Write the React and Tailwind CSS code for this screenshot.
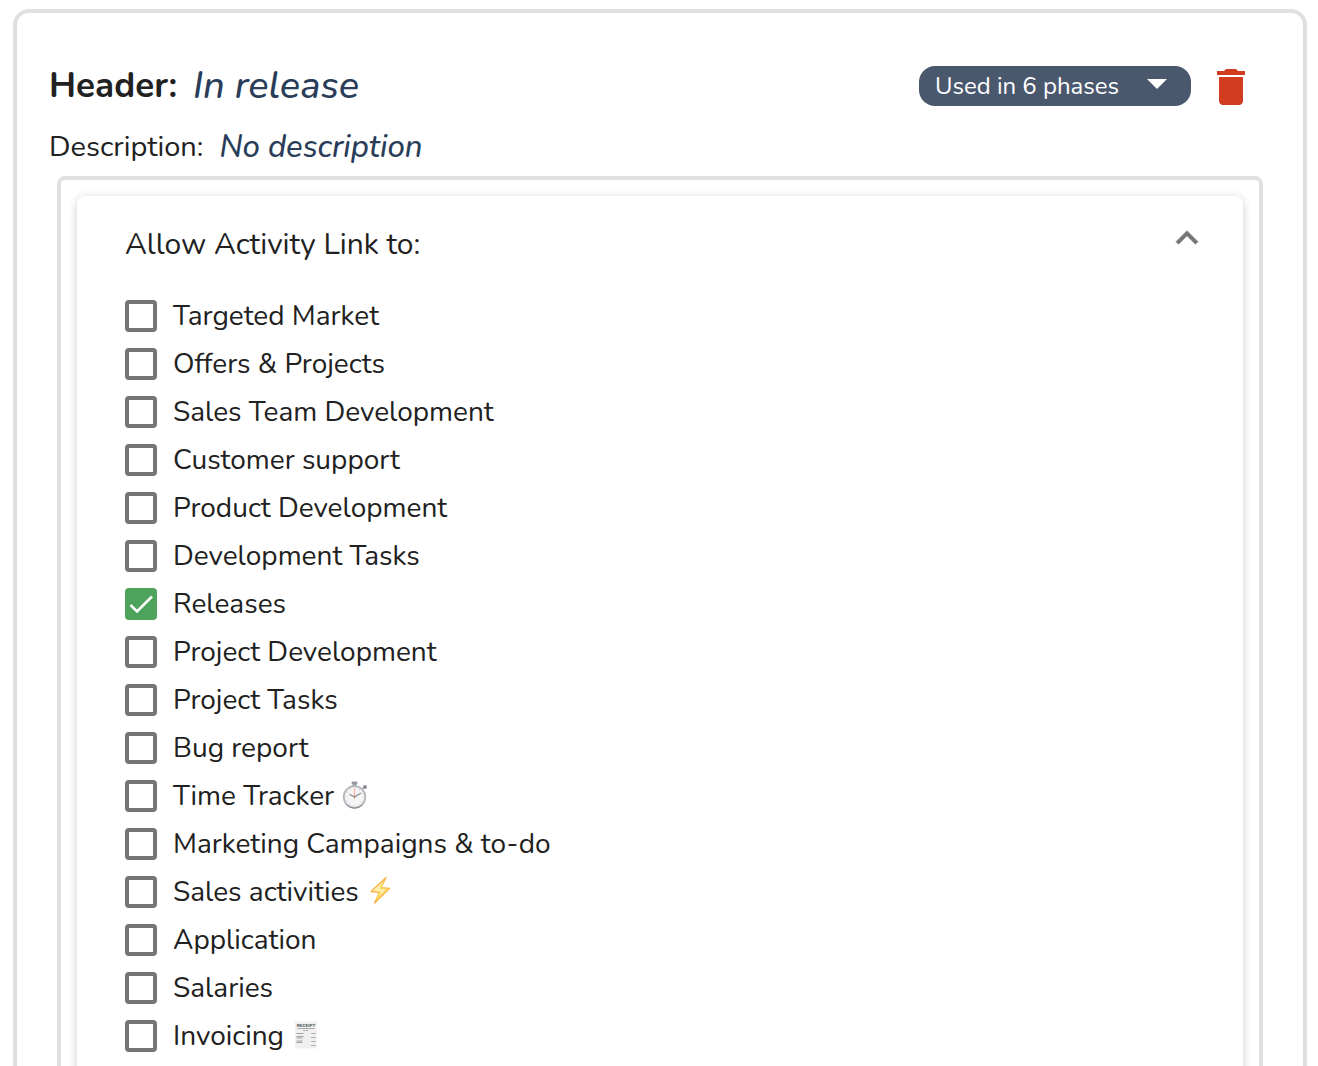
import { useState } from "react";

function Stopwatch() {
  return (
    <svg viewBox="0 0 26 28" className="mb-0.5 h-7 w-[26px]" aria-hidden="true">
      <rect x="10.500" y="1" width="4" height="5" fill="#a4a7ad" />
      <rect x="9.500" y="0.500" width="6" height="3" rx="1.400" fill="#9497a0" />
      <path d="M20.500 8l1.500-1.500" stroke="#a4a7ad" strokeWidth="1.500" />
      <circle cx="23" cy="6" r="1.900" fill="#85888e" />
      <circle cx="12.500" cy="16" r="10.800" fill="#f5f5f5" stroke="#b4b7bc" strokeWidth="1.800" />
      <circle cx="12.500" cy="16" r="8.600" fill="none" stroke="#c2c4c8" strokeWidth="1.200" strokeDasharray="0.800 3.703" />
      <path d="M12.500 18V7.500" stroke="#f5b7a2" strokeWidth="1.300" />
      <path d="M7.500 13.300l5 2.800 6.500-4" fill="none" stroke="#85888e" strokeWidth="1.200" />
      <path d="M4.500 23.800a11.300 11.300 0 0 0 16 0" fill="none" stroke="#85888e" strokeWidth="1" />
    </svg>
  );
}

function Bolt() {
  return (
    <svg viewBox="0 0 26 28" className="mb-1 h-7 w-[26px]" aria-hidden="true">
      <path d="M19 1.500L4 15.500l8.500.8L7.500 27 22.500 12.500l-8.500-.8z" fill="#fff0b0" stroke="#f9b345" strokeWidth="1.300" strokeLinejoin="round" />
      <path d="M13.500 15.300L9.500 23.500l11-10.500-7-.5 3-7" fill="none" stroke="#ffd655" strokeWidth="1.200" />
    </svg>
  );
}

function Receipt() {
  return (
    <svg viewBox="0 0 26 28" className="mb-0.5 h-7 w-[26px]" aria-hidden="true">
      <path d="M3 0.500h22v27H3z" fill="#f0f0f0" />
      <text x="14" y="6" textAnchor="middle" fontSize="4.500" fontWeight="800" fill="#55585c">RECEIPT</text>
      <path d="M5.500 7.500h17" stroke="#a8a8a8" strokeWidth="1" />
      <path d="M11 9.500h6" stroke="#aaa" strokeWidth="1.200" strokeDasharray="2 1" />
      <path d="M4.500 12.500h7M4.500 15.500h7M4.500 17h6M4.500 20h6M4.500 21.500h6" stroke="#a0a0a0" strokeWidth="1" />
      <path d="M19 12.500h4.500M19 16.500h4.500M19 20.500h4.500M19 24.500h4.500" stroke="#b0b0b0" strokeWidth="1.200" />
    </svg>
  );
}

const activities = [
  { name: "Targeted Market" },
  { name: "Offers & Projects" },
  { name: "Sales Team Development" },
  { name: "Customer support" },
  { name: "Product Development" },
  { name: "Development Tasks" },
  { name: "Releases", checked: true },
  { name: "Project Development" },
  { name: "Project Tasks" },
  { name: "Bug report" },
  { name: "Time Tracker", Icon: Stopwatch },
  { name: "Marketing Campaigns & to-do" },
  { name: "Sales activities", Icon: Bolt },
  { name: "Application" },
  { name: "Salaries" },
  { name: "Invoicing", Icon: Receipt },
];

function ActivityOption({ name, checked = false, Icon }) {
  const [on, setOn] = useState(checked);
  return (
    <li>
      <label className="flex h-12 items-center gap-4">
        <span className="grid size-8 shrink-0">
          <input
            type="checkbox"
            checked={on}
            onChange={(e) => setOn(e.target.checked)}
            className="peer col-start-1 row-start-1 size-8 appearance-none rounded border-4 border-[#757575] bg-white checked:border-[#4da35b] checked:bg-[#4da35b]"
          />
          <svg viewBox="0 0 32 32" className="pointer-events-none invisible col-start-1 row-start-1 size-8 peer-checked:visible" aria-hidden="true">
            <path d="M5.500 17l6.500 6.500L27 8.500" fill="none" stroke="white" strokeWidth="2.600" />
          </svg>
        </span>
        <span className="flex items-center gap-2 text-[28px] leading-9">
          {name}
          {Icon && <Icon />}
        </span>
      </label>
    </li>
  );
}

export default function App() {
  const [open, setOpen] = useState(true);
  return (
    <main className="h-screen overflow-hidden bg-white pt-[9px] pr-[11px] pl-[13px] font-['Nunito','Lato',sans-serif] text-[#212121]">
      <section className="rounded-2xl border-4 border-[#e0e0e0] px-8 pt-[53px] pb-10">
        <header className="flex h-10 items-center justify-between pr-4">
          <h1 className="flex items-center gap-4 text-[35px] leading-10">
            <span className="font-bold">Header:</span>
            <em className="text-[38px] font-medium text-[#293d59]">In release</em>
          </h1>
          <div className="flex items-center gap-4">
            <button type="button" className="flex h-10 w-[272px] items-center justify-between rounded-2xl bg-[#4a586e] pr-6 pl-4 text-[24px] text-white">
              Used in 6 phases
              <svg viewBox="0 0 20 10" className="mb-1 h-2.5 w-5" aria-hidden="true">
                <path d="M0 0h20L10 10z" fill="currentColor" />
              </svg>
            </button>
            <button type="button" aria-label="Delete" className="pt-0.5 text-[#d13c20]">
              <svg viewBox="0 0 24 24" className="size-12" fill="currentColor" aria-hidden="true">
                <path d="M6 19c0 1.100.9 2 2 2h8c1.100 0 2-.9 2-2V7H6v12zM19 4h-3.500l-1-1h-5l-1 1H5v2h14V4z" />
              </svg>
            </button>
          </div>
        </header>
        <p className="mt-5 flex h-[42px] items-center gap-4 text-[29px] leading-10">
          <span>Description:</span>
          <em className="text-[31px] font-medium text-[#293d59]">No description</em>
        </p>
        <div className="mx-2 mt-2 rounded-lg border-4 border-[#e0e0e0] p-4">
          <div className="rounded-lg bg-white px-12 py-6 shadow-[0_2px_10px_rgba(0,0,0,0.2)]">
            <div className="-mr-3.5 flex h-[50px] items-center justify-between">
              <h2 className="text-[30px] leading-10">Allow Activity Link to:</h2>
              <button type="button" aria-label="Toggle activity list" aria-expanded={open} onClick={() => setOpen(!open)} className="mb-3.5 text-[#757575]">
                <svg viewBox="0 0 24 24" className="size-11" fill="currentColor" aria-hidden="true">
                  <path d="M12 8l-6 6 1.410 1.410L12 10.830l4.590 4.580L18 14z" stroke="currentColor" strokeWidth="0.300" strokeLinejoin="round" />
                </svg>
              </button>
            </div>
            {open && (
              <ul className="mt-[22px]">
                {activities.map((a) => (
                  <ActivityOption key={a.name} {...a} />
                ))}
              </ul>
            )}
          </div>
        </div>
      </section>
    </main>
  );
}
